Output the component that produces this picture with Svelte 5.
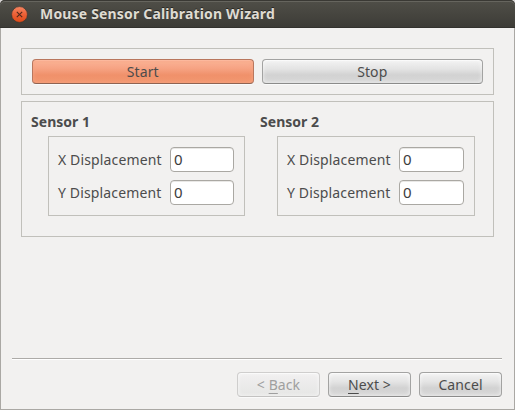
<script>
  const sensors = $state([
    { name: 'Sensor 1', x: '0', y: '0' },
    { name: 'Sensor 2', x: '0', y: '0' }
  ]);
</script>

<div class="window">
  <header>
    <svg class="close" width="17" height="17" viewBox="0 0 17 17" aria-label="Close">
      <defs>
        <linearGradient id="orb" x1="0" y1="0" x2="0" y2="1">
          <stop offset="0" stop-color="#f58662" />
          <stop offset="0.5" stop-color="#ec6036" />
          <stop offset="1" stop-color="#df4a17" />
        </linearGradient>
      </defs>
      <circle cx="8.5" cy="8.5" r="7.9" fill="url(#orb)" stroke="#34332e" stroke-width="0.6" />
      <path d="M5.8 5.8l5.4 5.4M11.2 5.8l-5.4 5.4" stroke="#52291b" stroke-width="1.1" fill="none" />
    </svg>
    <h1><span>Mouse Sensor Calibration Wizard</span></h1>
  </header>
  <main>
    <section class="group actions">
      <button class="btn start">Start</button>
      <button class="btn">Stop</button>
    </section>
    <section class="group sensors">
      {#each sensors as sensor}
        <div class="sensor">
          <h2><span>{sensor.name}</span></h2>
          <div class="fields">
            <label><span>X Displacement</span><input bind:value={sensor.x} /></label>
            <label><span>Y Displacement</span><input bind:value={sensor.y} /></label>
          </div>
        </div>
      {/each}
    </section>
    <footer>
      <button class="btn" disabled><span>&lt; <u>B</u>ack</span></button>
      <button class="btn"><span><u>N</u>ext &gt;</span></button>
      <button class="btn">Cancel</button>
    </footer>
  </main>
</div>

<style>
  :global(body) { margin: 0; background: #d8d5d4; }
  * { box-sizing: border-box; }
  .window {
    width: 515px;
    height: 410px;
    display: flex;
    flex-direction: column;
    font: 14px/17px "Noto Sans", "Open Sans", sans-serif;
    color: #4c4c4c;
  }
  header {
    height: 28px;
    flex: none;
    display: flex;
    align-items: center;
    padding: 1px 11px 0;
    gap: 12px;
    border-radius: 5px 5px 0 0;
    background: linear-gradient(#504f48, #3d3c37);
    border-bottom: 1px solid #33322e;
    box-shadow: inset 0 1px #3a3934, inset 0 2px #66655e;
  }
  .close { flex: none; display: block; }
  h1 {
    margin: 0;
    font-size: 14px;
    line-height: 18px;
    font-weight: 700;
    color: #dfdbd2;
    white-space: nowrap;
    text-shadow: 0 -1px #292824;
    letter-spacing: 0.18px;
  }
  main {
    flex: 1;
    display: flex;
    flex-direction: column;
    padding: 20px 12px 12px 11px;
    background: #f2f1f0;
    border: 1px solid #aaa8a4;
    border-top: 0;
  }
  .group { border: 1px solid #c1c0bb; margin: 0 8px 0 9px; width: 473px; }
  .actions { height: 47px; padding: 10px; display: flex; gap: 8px; }
  .actions .btn { width: 222px; }
  .sensors {
    height: 136px;
    margin-top: 6px;
    display: flex;
    padding: 11px 0 0 9px;
  }
  .sensor { width: 229px; }
  h2 { margin: 0; font-size: 14px; line-height: 17px; height: 23px; font-weight: 700; letter-spacing: 0.03px; }
  .fields {
    margin-left: 17px;
    width: 197px;
    height: 80px;
    border: 1px solid #c1c0bb;
    padding: 10px 10px 10px 9px;
    display: flex;
    flex-direction: column;
    gap: 8px;
  }
  .sensor + .sensor .fields { width: 198px; }
  label { display: flex; height: 25px; align-items: center; }
  label span { width: 112px; flex: none; white-space: nowrap; letter-spacing: 0.14px; }
  input {
    flex: 1;
    min-width: 0;
    height: 25px;
    padding: 0 3px 2px;
    border: 1px solid #aaa8a3;
    border-radius: 4px;
    background: #fff;
    box-shadow: inset 0 1px #e9e8e6;
    font: inherit;
    font-size: 15px;
    color: #3c3c3c;
    outline: none;
  }
  .btn {
    width: 83px;
    height: 25px;
    padding: 0 0 1px;
    border: 1px solid #a3a3a2;
    border-bottom-color: #8b8b8a;
    border-radius: 4px;
    background: linear-gradient(#f3f3f3, #e4e4e4 38%, #d2d2d2 65%, #d8d8d8);
    box-shadow: inset 0 1px #ffffff80, inset 0 0 4px #ffffffb0, 0 1px #fafafa;
    font: inherit;
    letter-spacing: 0.1px;
    color: #4c4c4c;
  }
  .start {
    border-color: #b9775e;
    border-bottom-color: #8e6352;
    background: linear-gradient(#fbb497, #f6a282 38%, #f0916b 65%, #f2966f);
    box-shadow: inset 0 1px #ffc3ab80, inset 0 0 4px #f6a582, 0 1px #fafafa;
  }
  .btn:disabled {
    border-color: #cfcecd;
    border-bottom-color: #c3c2c1;
    background: linear-gradient(#f1f0f0, #e6e6e5);
    color: #9f9f9f;
  }
  u { text-decoration: underline; text-decoration-thickness: 1px; text-underline-offset: 3px; text-decoration-skip-ink: none; }
  footer {
    margin-top: auto;
    width: 490px;
    height: 39px;
    padding-top: 13px;
    border-top: 1px solid #adaba8;
    box-shadow: inset 0 1px #fff;
    display: flex;
    justify-content: flex-end;
    gap: 8px;
  }
</style>
